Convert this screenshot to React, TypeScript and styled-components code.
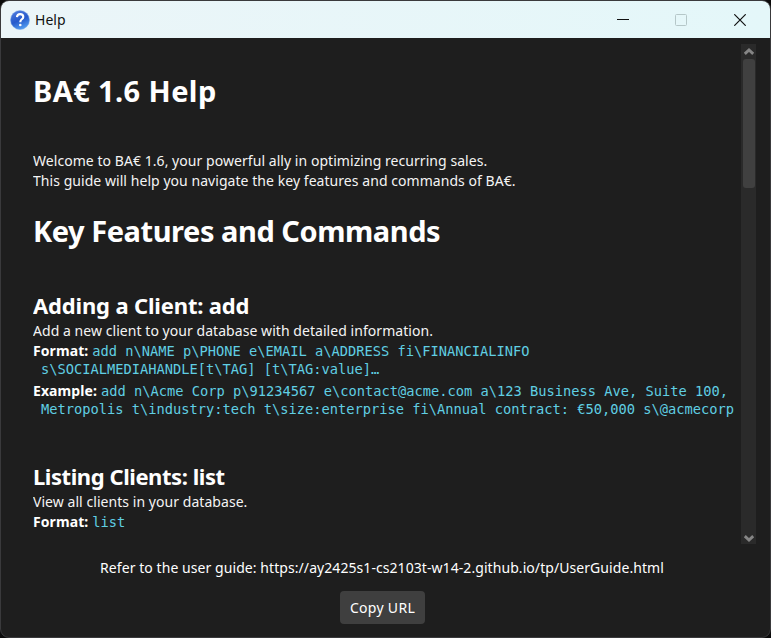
import React from 'react';
import styled, { createGlobalStyle } from 'styled-components';

const GlobalStyle = createGlobalStyle`
  * { box-sizing: border-box; }
  body { margin: 0; background: #0b0b0b; font-family: "Noto Sans", "Open Sans", sans-serif; }
`;

const Window = styled.main`
  width: 771px;
  height: 638px;
  display: flex;
  flex-direction: column;
  overflow: hidden;
  border: 1px solid #3a3a3c;
  border-radius: 9px;
  background: #1e1e1e;
  color: #fff;
`;

const TitleBar = styled.header`
  flex: none;
  height: 37px;
  display: flex;
  align-items: center;
  padding-left: 9px;
  background: linear-gradient(90deg, #ebf5f8, #e4f7f9);
  color: #111;
`;

const WindowTitle = styled.span`
  flex: 1;
  margin-left: 5px;
  font-size: 14px;
  line-height: 20px;
  letter-spacing: 0.05px;
`;

const WindowControl = styled.button<{ $faded?: boolean }>`
  width: 58px;
  height: 37px;
  display: flex;
  align-items: center;
  justify-content: center;
  padding: 0;
  border: 0;
  background: none;
  color: ${(p) => (p.$faded ? '#b5c7c8' : '#111')};

  &:last-child { width: 60px; }
`;

const Controls = styled.div`
  display: flex;
`;

const Body = styled.div`
  flex: none;
  display: flex;
  height: 507px;
  padding: 6px 14px 0 32px;
`;

const Guide = styled.article`
  flex: 1;
  min-width: 0;
  height: 501px;
  padding-top: 27px;
  overflow: hidden;
  white-space: pre;
`;

const Heading = styled.h1<{ $tracking: number }>`
  margin: 0;
  font-size: 29px;
  font-weight: 700;
  line-height: 40px;
  letter-spacing: ${(p) => p.$tracking}px;
`;

const Intro = styled.div`
  margin: 40px 0 20px;
`;

const Text = styled.p`
  margin: 0;
  font-size: 14px;
  line-height: 20px;
  letter-spacing: 0.052px;
  color: #f4f4f4;
`;

const Section = styled.section`
  margin-top: 39px;

  & + & { margin-top: 42px; }
`;

const CommandTitle = styled.h2<{ $tracking: number }>`
  margin: 0;
  font-size: 22px;
  font-weight: 700;
  line-height: 31px;
  letter-spacing: ${(p) => p.$tracking}px;
`;

const Entry = styled.div`
  display: flex;
  align-items: baseline;
  height: 20px;
`;

const Label = styled.strong`
  margin-right: 4px;
  font-size: 14px;
  line-height: 20px;
  letter-spacing: 0.08px;
`;

const Code = styled.code`
  font-family: "DejaVu Sans Mono", "Liberation Mono", monospace;
  font-size: 13.71px;
  line-height: 18px;
  color: #60cfe3;
`;

const Continuation = styled(Code)`
  display: block;
  height: 20px;
  padding-left: 8px;
  line-height: 16px;

  &:last-child { height: 18px; }
`;

const ScrollBar = styled.div`
  flex: none;
  width: 15px;
  height: 500px;
  display: flex;
  flex-direction: column;
  align-items: center;
  background: #2a2a2a;
`;

const ScrollArrow = styled.div<{ $end?: boolean }>`
  height: 15px;
  display: flex;
  align-items: center;
  padding-top: ${(p) => (p.$end ? 3 : 0)}px;
`;

const ScrollTrack = styled.div`
  flex: 1;
`;

const ScrollThumb = styled.div`
  width: 12px;
  height: 129px;
  border-radius: 3px;
  background: #404040;
`;

const Footer = styled.footer`
  flex: 1;
  display: flex;
  flex-direction: column;
  align-items: center;
  padding: 13px 7px 0 0;
`;

const GuideLink = styled.p`
  margin: 0;
  font-size: 14px;
  line-height: 20px;
  letter-spacing: 0.067px;
`;

const CopyButton = styled.button`
  width: 85px;
  height: 33px;
  margin: 13px 0 0 1px;
  padding: 0;
  border: 0;
  border-radius: 4px;
  background: #3f3f3f;
  color: #fff;
  font: 400 14px/33px "Noto Sans", "Open Sans", sans-serif;
  letter-spacing: 0.3px;
`;

const HelpIcon = () => (
  <svg width="20" height="20" viewBox="0 0 20 20" fill="none">
    <defs>
      <linearGradient id="disc" x1="6" y1="1" x2="14" y2="19" gradientUnits="userSpaceOnUse">
        <stop stopColor="#4b78dc" />
        <stop offset=".5" stopColor="#2659cb" />
        <stop offset="1" stopColor="#54a0f2" />
      </linearGradient>
    </defs>
    <circle cx="10" cy="10" r="9.5" fill="url(#disc)" stroke="#7eabe8" strokeWidth=".5" />
    <path d="M6.9 7.2C7.2 4.9 8.4 4.1 10.1 4.1c1.9 0 3.2 1 3.2 2.8 0 2.3-2.9 2.4-2.9 4.5v.9" stroke="#fff" strokeWidth="2.1" />
    <circle cx="10.3" cy="15" r="1.3" fill="#fff" />
  </svg>
);

const Chevron = ({ down = false }: { down?: boolean }) => (
  <svg width="12" height="9" viewBox="0 0 12 9" fill="none">
    <path d={down ? 'M1.8 2.2 6 6 10.2 2.2' : 'M1.8 6.8 6 3 10.2 6.8'} stroke="#858585" strokeWidth="2.9" />
  </svg>
);

export default function App() {
  return (
    <>
      <GlobalStyle />
      <Window>
        <TitleBar>
          <HelpIcon />
          <WindowTitle>Help</WindowTitle>
          <Controls>
            <WindowControl aria-label="Minimize">
              <svg width="12" height="12"><path d="M0 5.5h12" stroke="currentColor" /></svg>
            </WindowControl>
            <WindowControl aria-label="Maximize" $faded>
              <svg width="12" height="12" fill="none"><rect x=".5" y=".5" width="11" height="11" rx="1" stroke="currentColor" /></svg>
            </WindowControl>
            <WindowControl aria-label="Close">
              <svg width="12" height="12"><path d="m.3.3 11.4 11.4M11.7.3.3 11.7" stroke="currentColor" strokeWidth="1.2" /></svg>
            </WindowControl>
          </Controls>
        </TitleBar>
        <Body>
          <Guide>
            <Heading $tracking={0.4}>BA€ 1.6 Help</Heading>
            <Intro>
              <Text>Welcome to BA€ 1.6, your powerful ally in optimizing recurring sales.</Text>
              <Text>This guide will help you navigate the key features and commands of BA€.</Text>
            </Intro>
            <Heading $tracking={-0.45}>Key Features and Commands</Heading>
            <Section>
              <CommandTitle $tracking={-0.16}>Adding a Client: add</CommandTitle>
              <Text>Add a new client to your database with detailed information.</Text>
              <Entry>
                <Label>Format:</Label>
                <Code>{'add n\\NAME p\\PHONE e\\EMAIL a\\ADDRESS fi\\FINANCIALINFO'}</Code>
              </Entry>
              <Continuation>{'s\\SOCIALMEDIAHANDLE[t\\TAG] [t\\TAG:value]…'}</Continuation>
              <Entry>
                <Label>Example:</Label>
                <Code>{'add n\\Acme Corp p\\91234567 e\\contact@acme.com a\\123 Business Ave, Suite 100,'}</Code>
              </Entry>
              <Continuation>{'Metropolis t\\industry:tech t\\size:enterprise fi\\Annual contract: €50,000 s\\@acmecorp'}</Continuation>
            </Section>
            <Section>
              <CommandTitle $tracking={-0.44}>Listing Clients: list</CommandTitle>
              <Text>View all clients in your database.</Text>
              <Entry>
                <Label>Format:</Label>
                <Code>list</Code>
              </Entry>
            </Section>
          </Guide>
          <ScrollBar>
            <ScrollArrow><Chevron /></ScrollArrow>
            <ScrollTrack><ScrollThumb /></ScrollTrack>
            <ScrollArrow $end><Chevron down /></ScrollArrow>
          </ScrollBar>
        </Body>
        <Footer>
          <GuideLink>Refer to the user guide: https://ay2425s1-cs2103t-w14-2.github.io/tp/UserGuide.html</GuideLink>
          <CopyButton>Copy URL</CopyButton>
        </Footer>
      </Window>
    </>
  );
}
